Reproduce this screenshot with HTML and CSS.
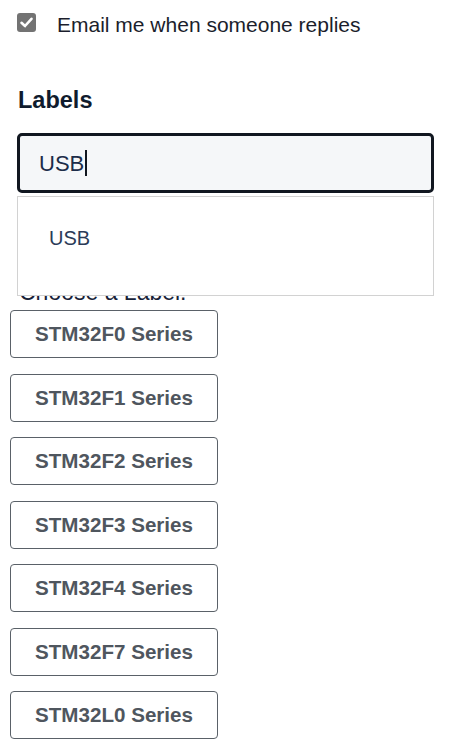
FILE: index.html
```html
<!DOCTYPE html>
<html lang="en">
<head>
<meta charset="utf-8">
<title>Labels</title>
<link rel="stylesheet" href="styles.css">
</head>
<body>
<div class="page">
  <label class="notify">
    <span class="check">
      <svg viewBox="0 0 19 19" width="19" height="19"><path d="M4.5 9.8 L8 13 L14.5 5.8" fill="none" stroke="#fff" stroke-width="2.6" stroke-linecap="round" stroke-linejoin="round"/></svg>
    </span>
    <span class="notify-text">Email me when someone replies</span>
  </label>

  <h2 class="labels-title">Labels</h2>

  <div class="field">
    <div class="input"><span class="value">USB</span><span class="caret"></span></div>
    <div class="dropdown">
      <div class="option">USB</div>
    </div>
  </div>

  <p class="choose">Choose a Label:</p>

  <div class="label-list">
    <button class="label-btn">STM32F0 Series</button>
    <button class="label-btn">STM32F1 Series</button>
    <button class="label-btn">STM32F2 Series</button>
    <button class="label-btn">STM32F3 Series</button>
    <button class="label-btn">STM32F4 Series</button>
    <button class="label-btn">STM32F7 Series</button>
    <button class="label-btn">STM32L0 Series</button>
  </div>
</div>
</body>
</html>
```

FILE: styles.css
```css
html, body {
  margin: 0;
  padding: 0;
  background: #ffffff;
}
body {
  font-family: "Liberation Sans", Arial, sans-serif;
  color: #1a1f2e;
  overflow: hidden;
}
.page {
  display: flex;
  flex-direction: column;
  align-items: flex-start;
}
.notify {
  display: flex;
  align-items: flex-start;
  gap: 21px;
  margin: 13px 0 0 17px;
  line-height: 24px;
}
.check {
  width: 19px;
  height: 19px;
  border-radius: 3px;
  background: #737373;
  display: block;
}
.check svg { display: block; }
.notify-text {
  font-size: 21px;
  color: #1b1e2c;
}
.labels-title {
  margin: 50px 0 0 18px;
  font-size: 23.5px;
  line-height: 26px;
  font-weight: bold;
  color: #0f1b2d;
}
.field {
  position: relative;
  margin: 20px 0 0 17px;
  width: 417px;
}
.input {
  box-sizing: border-box;
  height: 60px;
  border: 3px solid #111720;
  border-radius: 5px;
  background: #f5f7f9;
  display: flex;
  align-items: center;
  padding-left: 19px;
}
.value {
  font-size: 22px;
  color: #1c2d4a;
  line-height: 26px;
  padding-top: 1px;
}
.caret {
  width: 2px;
  height: 26px;
  background: #111720;
  margin-left: 1px;
}
.dropdown {
  position: absolute;
  top: calc(100% + 3px);
  left: 0;
  width: 417px;
  height: 100px;
  box-sizing: border-box;
  border: 1px solid #d2d2d2;
  background: #ffffff;
  z-index: 2;
}
.option {
  padding: 30px 0 0 31px;
  font-size: 20px;
  line-height: 23px;
  color: #2b3b58;
}
.choose {
  margin: 86px 0 0 19px;
  font-size: 23px;
  line-height: 27px;
  color: #172238;
}
.label-list {
  margin: 4px 0 0 10px;
  display: flex;
  flex-direction: column;
  gap: 15.5px;
}
.label-btn {
  box-sizing: border-box;
  width: 208px;
  height: 48px;
  border: 1px solid #5a6168;
  border-radius: 4px;
  background: #ffffff;
  font-family: "Liberation Sans", Arial, sans-serif;
  font-weight: bold;
  font-size: 20.6px;
  color: #4f565e;
  padding: 0;
  text-align: center;
}
```
